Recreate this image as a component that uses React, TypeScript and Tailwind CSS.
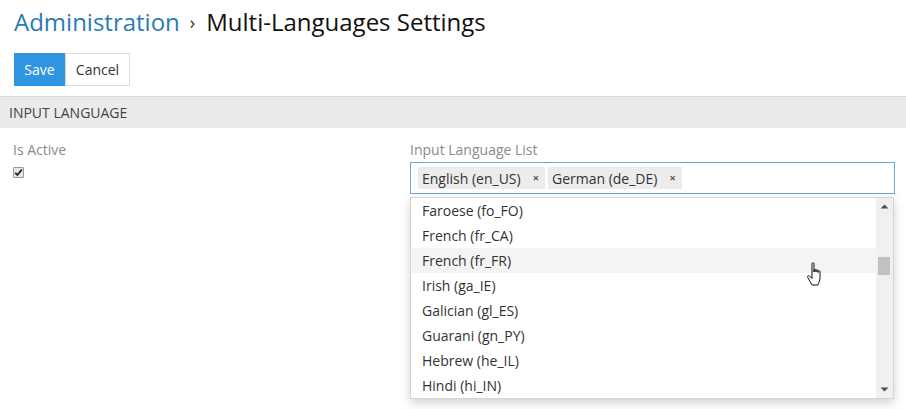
import React from "react";

const items = [
  "Faroese (fo_FO)",
  "French (fr_CA)",
  "French (fr_FR)",
  "Irish (ga_IE)",
  "Galician (gl_ES)",
  "Guarani (gn_PY)",
  "Hebrew (he_IL)",
  "Hindi (hi_IN)",
];

function Tag({ label }: { label: string }) {
  return (
    <div className="flex h-[22px] items-center bg-[#ececec] pl-[4px] pr-[6px] text-[14px] text-[#333]">
      <span>{label}</span>
      <span className="ml-[12px] text-[11px] font-bold text-[#555]">×</span>
    </div>
  );
}

export default function App() {
  return (
    <div
      className="relative h-[409px] w-[906px] overflow-hidden bg-white"
      style={{ fontFamily: '"Open Sans", "Noto Sans", sans-serif' }}
    >
      <div className="px-[14px] pt-[5px]">
        <h1 className="flex items-center text-[24px] leading-[34px] text-[#111]">
          <span className="text-[#2b7bb5]">Administration</span>
          <span className="ml-[10px] mr-[11px] text-[18px] text-[#333]">›</span>
          <span>Multi-Languages Settings</span>
        </h1>
        <div className="mt-[14px] flex">
          <button className="h-[33px] w-[51px] bg-[#3095e0] text-[14px] text-white">
            Save
          </button>
          <button className="h-[33px] w-[65px] border border-[#dcdcdc] bg-white text-[14px] text-[#333]">
            Cancel
          </button>
        </div>
      </div>
      <div className="mt-[10px] flex h-[32px] items-center border-t border-[#dadada] bg-[#ebebeb] pl-[9px] text-[14px] text-[#444]">
        INPUT LANGUAGE
      </div>
      <div className="flex pt-[12px]">
        <div className="w-[410px] pl-[13px]">
          <div className="text-[14px] leading-[19px] text-[#8a8a8a]">Is Active</div>
          <div className="mt-[8px] flex h-[11px] w-[11px] items-center justify-center rounded-[1px] border border-[#9a9a9a] bg-[#e6e6e6]">
            <svg width="9" height="9" viewBox="0 0 9 9">
              <path d="M1.2 4.8 L3.4 7 L7.8 1.6" fill="none" stroke="#222" strokeWidth="1.8" />
            </svg>
          </div>
        </div>
        <div className="w-[485px]">
          <div className="text-[14px] leading-[19px] text-[#8a8a8a]">Input Language List</div>
          <div className="mt-[3px] flex h-[32px] items-center gap-[3px] border border-[#6ea7d8] pl-[7px]">
            <Tag label="English (en_US)" />
            <Tag label="German (de_DE)" />
          </div>
          <div className="relative mt-[3px] flex h-[202px] w-[484px] border border-[#d4d4d4] bg-white shadow-[0_4px_10px_rgba(0,0,0,0.18)]">
            <div className="flex-1">
              {items.map((it, i) => (
                <div
                  key={it}
                  className={`flex h-[25px] items-center pl-[11px] text-[14px] text-[#333] ${
                    i === 2 ? "bg-[#f4f4f4]" : ""
                  }`}
                >
                  {it}
                </div>
              ))}
            </div>
            <div className="relative w-[17px] bg-[#f0f0f0]">
              <svg className="absolute left-[4px] top-[6px]" width="9" height="5" viewBox="0 0 9 5">
                <path d="M0.5 4.5 L4.5 0.5 L8.5 4.5 Z" fill="#505050" />
              </svg>
              <div className="absolute left-[2px] top-[59px] h-[18px] w-[12px] bg-[#c1c1c1]" />
              <svg className="absolute bottom-[6px] left-[4px]" width="9" height="5" viewBox="0 0 9 5">
                <path d="M0.5 0.5 L4.5 4.5 L8.5 0.5 Z" fill="#505050" />
              </svg>
            </div>
          </div>
        </div>
      </div>
      <svg
        className="absolute left-[806px] top-[261px]"
        width="22"
        height="28"
        viewBox="0 0 22 28"
      >
        <path
          d="M6 2.5 C6 1.5 8 1.5 8 2.5 L8 11 L8 9 C8 8 10 8 10 9 L10 11 L10 9.5 C10 8.5 12 8.5 12 9.5 L12 11.5 L12 10.5 C12 9.5 14 9.5 14 10.5 L14 17 C14 20 12.5 22 12 24 L6 24 C5 22 3 19 1.8 16.5 C1 15 2.5 14 3.5 15 L6 17.5 Z"
          fill="white"
          stroke="#111"
          strokeWidth="1"
          strokeLinejoin="round"
        />
      </svg>
    </div>
  );
}
